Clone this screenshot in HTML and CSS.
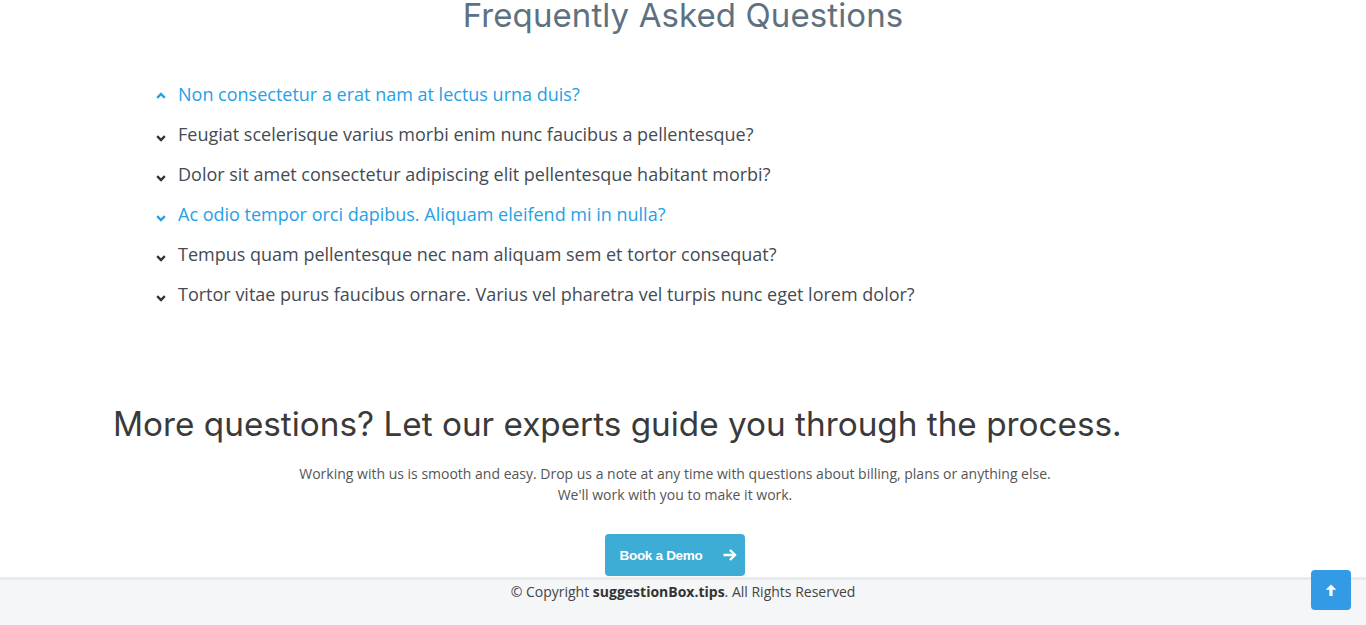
FILE: index.html
```html
<!DOCTYPE html>
<html lang="en">
<head>
<meta charset="utf-8">
<title>FAQ</title>
<link rel="stylesheet" href="styles.css">
</head>
<body>
<section class="faq">
  <h2 class="faq-title">Frequently Asked Questions</h2>
  <ul class="faq-list">
    <li class="faq-item open"><svg class="chev" viewBox="0 0 10 7" width="10" height="7"><polyline points="1.2,5.8 5,2 8.8,5.8" /></svg><span>Non consectetur a erat nam at lectus urna duis?</span></li>
    <li class="faq-item"><svg class="chev" viewBox="0 0 10 7" width="10" height="7"><polyline points="1.2,1.2 5,5 8.8,1.2" /></svg><span>Feugiat scelerisque varius morbi enim nunc faucibus a pellentesque?</span></li>
    <li class="faq-item"><svg class="chev" viewBox="0 0 10 7" width="10" height="7"><polyline points="1.2,1.2 5,5 8.8,1.2" /></svg><span>Dolor sit amet consectetur adipiscing elit pellentesque habitant morbi?</span></li>
    <li class="faq-item active"><svg class="chev" viewBox="0 0 10 7" width="10" height="7"><polyline points="1.2,1.2 5,5 8.8,1.2" /></svg><span>Ac odio tempor orci dapibus. Aliquam eleifend mi in nulla?</span></li>
    <li class="faq-item"><svg class="chev" viewBox="0 0 10 7" width="10" height="7"><polyline points="1.2,1.2 5,5 8.8,1.2" /></svg><span>Tempus quam pellentesque nec nam aliquam sem et tortor consequat?</span></li>
    <li class="faq-item"><svg class="chev" viewBox="0 0 10 7" width="10" height="7"><polyline points="1.2,1.2 5,5 8.8,1.2" /></svg><span>Tortor vitae purus faucibus ornare. Varius vel pharetra vel turpis nunc eget lorem dolor?</span></li>
  </ul>
</section>
<section class="cta">
  <h2 class="cta-title">More questions? Let our experts guide you through the process.</h2>
  <p class="cta-text">Working with us is smooth and easy. Drop us a note at any time with questions about billing, plans or anything else.<br>We'll work with you to make it work.</p>
  <div class="cta-action">
    <a class="btn-demo" href="#">Book a Demo <svg class="arrow" viewBox="0 0 16 14" width="16" height="14"><path d="M1.5 7H13M8 2l5 5-5 5" /></svg></a>
  </div>
</section>
<footer class="footer">
  <p>© Copyright <strong>suggestionBox.tips</strong>. All Rights Reserved</p>
</footer>
<a class="back-top" href="#"><svg viewBox="0 0 14 14" width="14" height="14"><path d="M7 1.5L1.8 6.8h3.6V13h3.2V6.8h3.6z" /></svg></a>
</body>
</html>
```
FILE: styles.css
```css
html, body {
  margin: 0;
  padding: 0;
  background: #fff;
}
body {
  font-family: "Open Sans", "Liberation Sans", sans-serif;
  color: #444;
  overflow: hidden;
  height: 625px;
  position: relative;
}
.faq-title {
  margin: 0;
  text-align: center;
  font-family: Inter, "Liberation Sans", sans-serif;
  font-weight: 400;
  font-size: 33px;
  line-height: 31px;
  color: #5e7180;
  letter-spacing: 0.1px;
}
.faq-list {
  list-style: none;
  margin: 43px 0 0;
  padding: 0 0 0 155px;
}
.faq-item {
  display: flex;
  align-items: center;
  height: 40px;
  font-size: 18px;
  color: #444b52;
}
.faq-item .chev {
  width: 10px;
  height: 7px;
  margin: 8px 12px 0 1px;
  fill: none;
  stroke: #333;
  stroke-width: 2.4;
}
.faq-item.open .chev {
  margin-top: 3px;
}
.faq-item.open, .faq-item.active {
  color: #26a0e6;
}
.faq-item.open .chev, .faq-item.active .chev {
  stroke: #26a0e6;
}
.cta {
  padding-top: 88px;
}
.cta-title {
  margin: 0 0 0 113px;
  font-family: Inter, "Liberation Sans", sans-serif;
  font-weight: 400;
  font-size: 33.3px;
  line-height: 44px;
  color: #3a3a3a;
}
.cta-text {
  width: 1350px;
  margin: 17px 0 0;
  text-align: center;
  font-size: 14px;
  line-height: 21px;
  color: #555;
}
.cta-action {
  width: 1350px;
  display: flex;
  justify-content: center;
  margin-top: 29px;
}
.btn-demo {
  display: flex;
  align-items: center;
  gap: 20px;
  height: 42px;
  padding: 0 7px 0 15px;
  background: #3eadd5;
  border-radius: 4px;
  color: #fff;
  text-decoration: none;
  font-family: "Liberation Sans", Arial, sans-serif;
  font-weight: 700;
  font-size: 13.5px;
  letter-spacing: -0.3px;
}
.btn-demo .arrow {
  fill: none;
  stroke: #fff;
  stroke-width: 2.4;
}
.footer {
  border-top: 3px solid #e8ebee;
  background: #f5f6f8;
  height: 60px;
  margin-top: 1px;
}
.footer p {
  margin: 0;
  padding-top: 2px;
  text-align: center;
  font-size: 14px;
  line-height: 20px;
  color: #444;
}
.footer strong {
  color: #333;
}
.back-top {
  position: absolute;
  left: 1311px;
  top: 570px;
  width: 40px;
  height: 40px;
  border-radius: 4px;
  background: #339be5;
  display: flex;
  align-items: center;
  justify-content: center;
}
.back-top svg {
  fill: #fff;
}
```
